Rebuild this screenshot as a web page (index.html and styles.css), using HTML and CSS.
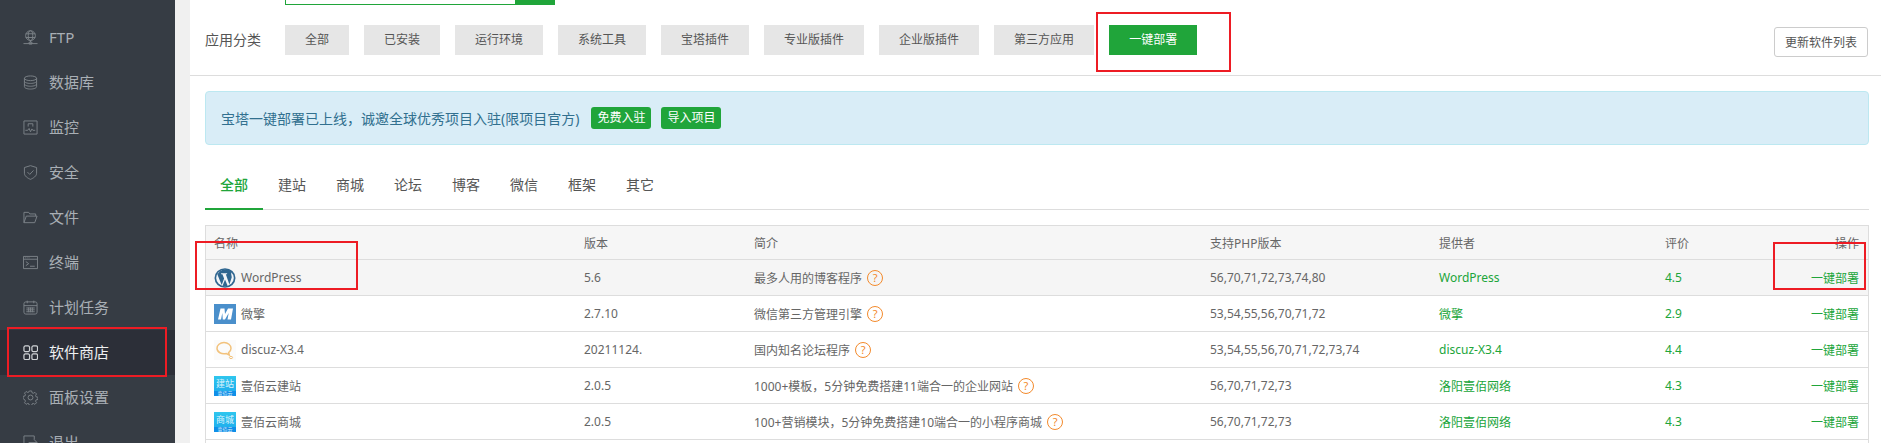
FILE: index.html
```html
<!DOCTYPE html>
<html lang="zh-CN">
<head>
<meta charset="utf-8">
<title>软件商店</title>
<link rel="stylesheet" href="styles.css">
</head>
<body>
<div class="app">
  <nav class="sidebar">
    <a class="nav-item"><svg class="nav-icon" viewBox="0 0 16 16"><circle cx="8" cy="6" r="5.2"/><ellipse cx="8" cy="6" rx="2.4" ry="5.2"/><path d="M3 4h10M3 8h10M8 11v2M0.500 14.500h15M6.500 13h3v2h-3z"/></svg><span>FTP</span></a>
    <a class="nav-item"><svg class="nav-icon" viewBox="0 0 16 16"><ellipse cx="8" cy="3.500" rx="6.500" ry="2.500"/><path d="M1.500 3.500v9c0 1.400 2.900 2.500 6.500 2.500s6.500-1.100 6.500-2.500v-9M1.500 6.500c0 1.400 2.900 2.500 6.500 2.500s6.500-1.100 6.500-2.500M1.500 9.500c0 1.400 2.900 2.500 6.500 2.500s6.500-1.100 6.500-2.500"/></svg><span>数据库</span></a>
    <a class="nav-item"><svg class="nav-icon" viewBox="0 0 16 16"><path d="M1 1h14v14H1z"/><path d="M2.500 11h2.500l1.500-2 1.500 3.500 1.500-3 1 1.500h2.500M5.500 7V4h5v3"/></svg><span>监控</span></a>
    <a class="nav-item"><svg class="nav-icon" viewBox="0 0 16 16"><path d="M8 .7l6.500 2v6.100c0 3-3.500 5.300-6.500 6.500-3-1.200-6.500-3.500-6.500-6.500V2.700z"/><path d="M4.800 7.600l2.400 2.400 4-4.200"/></svg><span>安全</span></a>
    <a class="nav-item"><svg class="nav-icon" viewBox="0 0 16 16"><path d="M1 13.500V2.500h5l1.200 1.700H13.500v2.300M1 13.500h11.500l2.500-7H3.500z"/></svg><span>文件</span></a>
    <a class="nav-item"><svg class="nav-icon" viewBox="0 0 16 16"><path d="M.5 1.500h15v13H.5zM.5 4.500h15M3 7l3 2.200L3 11.400M7.500 12h5"/><path d="M2 3h.8M4 3h.8M6 3h.8"/></svg><span>终端</span></a>
    <a class="nav-item"><svg class="nav-icon" viewBox="0 0 16 16"><rect x="1" y="2" width="14" height="13" rx="2"/><path d="M1 6h14M4.500 .7v2.800M11.500 .7v2.800M3.500 8.500h9M3.500 10.500h9M3.500 12.500h9M6 8v5M8 8v5M10 8v5"/></svg><span>计划任务</span></a>
    <a class="nav-item nav-item-active"><svg class="nav-icon" viewBox="0 0 16 16"><rect x="1" y="1" width="6" height="6" rx="1.500"/><rect x="9.500" y="1" width="6" height="6" rx="1.500"/><rect x="1" y="9.500" width="6" height="6" rx="1.500"/><rect x="9.500" y="9.500" width="6" height="6" rx="1.500"/></svg><span>软件商店</span></a>
    <a class="nav-item"><svg class="nav-icon" viewBox="0 0 16 16"><circle cx="8" cy="8" r="2.600"/><path d="M6.800 1h2.400l.4 1.900 1.400.6 1.700-1 1.700 1.700-1 1.700.6 1.400 1.900.4v2.400l-1.900.4-.6 1.400 1 1.700-1.700 1.700-1.700-1-1.400.6-.4 1.900H6.800l-.4-1.900-1.400-.6-1.700 1-1.700-1.700 1-1.700-.6-1.400L.1 9.200V6.800L2 6.400l.6-1.400-1-1.700 1.700-1.700 1.700 1 1.400-.6z"/></svg><span>面板设置</span></a>
    <a class="nav-item"><svg class="nav-icon" viewBox="0 0 16 16"><path d="M12 5V1H1v14h11v-3M6 8h9M12 5l3 3-3 3"/></svg><span>退出</span></a>
  </nav>

  <main class="content">
    <div class="search-stub"><div class="search-input"></div><div class="search-btn"></div></div>

    <section class="category-bar">
      <span class="category-label">应用分类</span>
      <div class="category-list">
        <a class="cat">全部</a>
        <a class="cat">已安装</a>
        <a class="cat">运行环境</a>
        <a class="cat">系统工具</a>
        <a class="cat">宝塔插件</a>
        <a class="cat">专业版插件</a>
        <a class="cat">企业版插件</a>
        <a class="cat">第三方应用</a>
        <a class="cat cat-active">一键部署</a>
      </div>
      <button class="refresh-btn">更新软件列表</button>
    </section>

    <section class="body">
      <div class="alert">
        <span>宝塔一键部署已上线，诚邀全球优秀项目入驻(限项目官方)</span>
        <a class="alert-btn alert-btn-first">免费入驻</a>
        <a class="alert-btn">导入项目</a>
      </div>

      <div class="tabs">
        <a class="tab tab-active">全部</a>
        <a class="tab">建站</a>
        <a class="tab">商城</a>
        <a class="tab">论坛</a>
        <a class="tab">博客</a>
        <a class="tab">微信</a>
        <a class="tab">框架</a>
        <a class="tab">其它</a>
      </div>

      <div class="table-wrap">
        <table class="apps">
          <colgroup>
            <col class="col-name"><col class="col-ver"><col class="col-desc"><col class="col-php"><col class="col-prov"><col class="col-rate"><col>
          </colgroup>
          <thead>
            <tr><th>名称</th><th>版本</th><th>简介</th><th>支持PHP版本</th><th>提供者</th><th>评价</th><th class="right">操作</th></tr>
          </thead>
          <tbody>
            <tr class="hover">
              <td><div class="app-name">
                <svg class="logo" viewBox="0 0 22 20"><ellipse cx="11" cy="10" rx="10.500" ry="9.800" fill="#2f6690"/><ellipse cx="11" cy="10" rx="8.800" ry="8.200" fill="#f2f5f8"/><path d="M3.300 6.300L7.700 17l2.400-6.500-1.700-4.300H7.100V5.300h6v.9h-1.300l3.600 10.200 2.200-6.600c.4-1.400-.6-3.300-.4-4.400.1-.7.500-1 .8-1.200A8.800 8.800 0 0 0 3.600 6.300z" fill="#2f6690"/><path d="M11 11.500l-2.400 6.300a8.800 8.800 0 0 0 5 0z" fill="#2f6690"/></svg>
                WordPress</div></td>
              <td>5.6</td>
              <td><div class="desc">最多人用的博客程序<span class="help">?</span></div></td>
              <td>56,70,71,72,73,74,80</td>
              <td class="green">WordPress</td>
              <td class="green">4.5</td>
              <td class="green right">一键部署</td>
            </tr>
            <tr>
              <td><div class="app-name">
                <svg class="logo" viewBox="0 0 22 20"><rect width="22" height="20" fill="#4a8fcb"/><path d="M4 15.500L6.500 4.500H10.500L11 10l3-5.500H19L17 15.500H13.500L14.700 9 11 15.500H8.800L8.300 9 7 15.500z" fill="#fff"/></svg>
                微擎</div></td>
              <td>2.7.10</td>
              <td><div class="desc">微信第三方管理引擎<span class="help">?</span></div></td>
              <td>53,54,55,56,70,71,72</td>
              <td class="green">微擎</td>
              <td class="green">2.9</td>
              <td class="green right">一键部署</td>
            </tr>
            <tr>
              <td><div class="app-name">
                <svg class="logo" viewBox="0 0 22 20"><rect width="22" height="20" fill="#fbfbfb"/><path d="M10 2.500c4 0 7 2.600 7 5.800 0 2-1 3.500-2.400 4.400l.7 2.300-3-1.500C7.500 14.500 3 12.300 3 8.300 3 5.100 6 2.500 10 2.500z" fill="none" stroke="#f2c27c" stroke-width="1.500"/><ellipse cx="17" cy="17.500" rx="1.600" ry="1.100" fill="none" stroke="#f2c27c"/></svg>
                discuz-X3.4</div></td>
              <td>20211124.</td>
              <td><div class="desc">国内知名论坛程序<span class="help">?</span></div></td>
              <td>53,54,55,56,70,71,72,73,74</td>
              <td class="green">discuz-X3.4</td>
              <td class="green">4.4</td>
              <td class="green right">一键部署</td>
            </tr>
            <tr>
              <td><div class="app-name">
                <div class="logo logo-yb"><span class="logo-main">建站</span><span class="logo-sub">壹佰云</span></div>
                壹佰云建站</div></td>
              <td>2.0.5</td>
              <td><div class="desc">1000+模板，5分钟免费搭建11端合一的企业网站<span class="help">?</span></div></td>
              <td>56,70,71,72,73</td>
              <td class="green">洛阳壹佰网络</td>
              <td class="green">4.3</td>
              <td class="green right">一键部署</td>
            </tr>
            <tr>
              <td><div class="app-name">
                <div class="logo logo-yb"><span class="logo-main">商城</span><span class="logo-sub">壹佰云</span></div>
                壹佰云商城</div></td>
              <td>2.0.5</td>
              <td><div class="desc">100+营销模块，5分钟免费搭建10端合一的小程序商城<span class="help">?</span></div></td>
              <td>56,70,71,72,73</td>
              <td class="green">洛阳壹佰网络</td>
              <td class="green">4.3</td>
              <td class="green right">一键部署</td>
            </tr>
            <tr class="stub"><td colspan="7"></td></tr>
          </tbody>
        </table>
      </div>
    </section>
  </main>

  <div class="mark mark-nav"></div>
  <div class="mark mark-cat"></div>
  <div class="mark mark-name"></div>
  <div class="mark mark-op"></div>
</div>
</body>
</html>
```
FILE: styles.css
```css
* { box-sizing: border-box; }
html, body { margin: 0; height: 443px; overflow: hidden; background: #f0f0f0; }
body { font-family: "Noto Sans", "Noto Sans CJK SC", sans-serif; font-size: 12px; color: #666; }
.app { position: relative; display: flex; height: 443px; overflow: hidden; }

.sidebar { flex: 0 0 175px; background: #363c44; padding-top: 15px; }
.nav-item { display: flex; align-items: center; height: 45px; padding-left: 23px; gap: 11px; font-size: 15px; color: #a9afb5; }
.nav-item span { margin-bottom: 2px; }
.nav-icon { flex: none; width: 15px; height: 15px; fill: none; stroke: #7d8389; stroke-width: 1; }
.nav-item-active { background: #2c2f38; color: #eef0f1; }
.nav-item-active .nav-icon { stroke: #cfd2d5; stroke-width: 1.300; }

.content { flex: 1; margin-left: 15px; background: #fff; min-width: 0; }
.search-stub { display: flex; height: 5px; width: 270px; margin-left: 95px; }
.search-input { flex: 1; border: 1px solid #20a53a; border-top: 0; }
.search-btn { width: 39px; background: #20a53a; }

.category-bar { display: flex; align-items: center; height: 71px; padding: 10px 13px 10px 15px; border-bottom: 1px solid #ddd; }
.category-label { width: 80px; margin-bottom: 2px; font-size: 14px; color: #555; }
.category-list { display: flex; gap: 15px; flex: 1; }
.cat { height: 30px; line-height: 30px; padding: 0 20px; background: #e6e6e6; color: #555; }
.cat-active { background: #20a53a; color: #fff; }
.refresh-btn { width: 94px; height: 30px; margin-top: 4px; padding: 0; font: inherit; color: #555; background: #fff; border: 1px solid #ccc; border-radius: 3px; }

.body { padding: 15px 12px 0 15px; }
.alert { display: flex; align-items: center; height: 54px; padding: 0 15px; background: #d9edf7; border: 1px solid #bce8f1; border-radius: 4px; font-size: 14px; color: #31708f; }
.alert-btn { height: 22px; line-height: 22px; padding: 0 6px; margin-left: 10px; background: #20a53a; border-radius: 3px; color: #fff; font-size: 12px; }
.alert-btn-first { margin-left: 12px; }

.tabs { display: flex; height: 65px; padding-top: 23px; border-bottom: 1px solid #ddd; }
.tab { width: 58px; height: 42px; line-height: 34px; text-align: center; font-size: 14px; color: #555; }
.tab-active { color: #20a53a; font-weight: 500; border-bottom: 2px solid #20a53a; }

.table-wrap { margin-top: 15px; border: 1px solid #ddd; border-bottom: 0; }
.apps { width: 100%; table-layout: fixed; border-collapse: separate; border-spacing: 0; }
.col-name { width: 370px; } .col-ver { width: 170px; } .col-desc { width: 456px; } .col-php { width: 229px; } .col-prov { width: 226px; } .col-rate { width: 100px; }
th, td { padding: 0 8px; text-align: left; font-weight: 400; border-bottom: 1px solid #ddd; }
th { height: 34px; background: #f6f6f6; }
td { height: 36px; }
.hover td { background: #f5f5f5; }
th.right, td.right { text-align: right; padding-right: 9px; }
.green { color: #20a53a; }
.app-name { display: flex; align-items: center; gap: 5px; }
.logo { flex: none; display: block; width: 22px; height: 20px; }
.logo-yb { display: flex; flex-direction: column; background: linear-gradient(#2fc6ee, #1ba8ec); color: rgba(255, 255, 255, .85); text-align: center; overflow: hidden; }
.logo-main { height: 15px; font-size: 9px; line-height: 15px; }
.logo-sub { height: 5px; font-size: 5px; line-height: 5px; background: #0f8fe8; }
.desc { display: flex; align-items: center; }
.help { display: block; width: 16px; height: 16px; margin-left: 5px; border: 1px solid #f38a2c; border-radius: 50%; color: #f38a2c; font-size: 11px; line-height: 14px; text-align: center; }
.stub td { height: 20px; border: 0; }

.mark { position: absolute; border: 2px solid #ed1c24; }
.mark-nav { left: 7px; top: 327px; width: 160px; height: 50px; }
.mark-cat { left: 1096px; top: 12px; width: 135px; height: 60px; }
.mark-name { left: 195px; top: 241px; width: 163px; height: 49px; }
.mark-op { left: 1773px; top: 242px; width: 93px; height: 48px; }
```
